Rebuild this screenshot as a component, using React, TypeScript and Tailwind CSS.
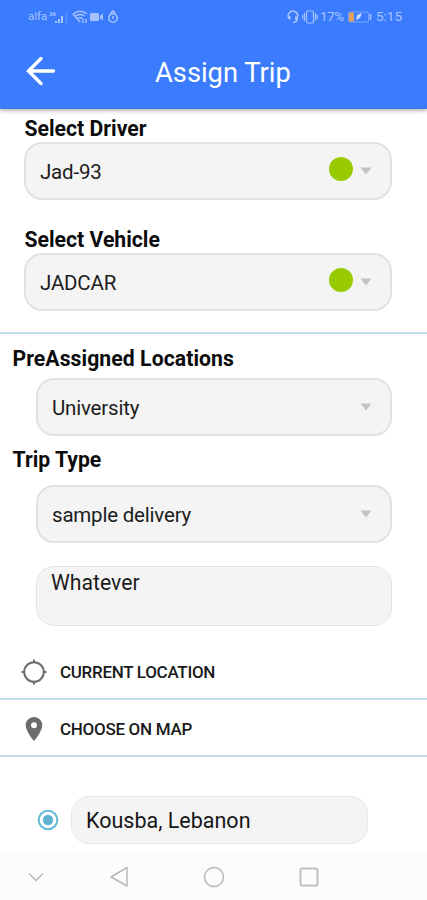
import clsx from 'clsx'
import type { ReactNode } from 'react'

function StatusBar() {
  return (
    <div className="flex h-[33px] items-center justify-between pl-[28px] pr-[25px] text-[#a6c3ff]">
      <div className="flex items-center">
        <span className="w-[19px] text-[11.5px] leading-none">alfa</span>
        <svg width="22" height="16" viewBox="0 0 22 16" fill="currentColor">
          <text x="2" y="7" fontSize="6" fontWeight="700">36</text>
          <rect x="8" y="12" width="2" height="2" />
          <rect x="11" y="10" width="2" height="4" />
          <rect x="14" y="7" width="2" height="7" />
          <rect x="18.5" y="3" width="2" height="11" opacity=".25" />
        </svg>
        <svg
          className="ml-[3px]"
          width="16"
          height="16"
          viewBox="0 0 16 16"
          fill="none"
          stroke="currentColor"
          strokeWidth="1.4"
        >
          <path d="M1 5Q8 -0.5 15 5M1 5L8 13M3.3 7.3Q8 3.8 12.5 7M5.5 9.7Q8 7.7 10.5 9.7" />
          <path d="M11 10V14M14 10V14" />
        </svg>
        <svg className="ml-[2px]" width="14" height="10" viewBox="0 0 14 10" fill="currentColor">
          <rect x="0" y="1" width="9" height="8" rx="1" />
          <path d="M9.8 4L13 1.5V8.5L9.8 6Z" />
        </svg>
        <svg
          className="ml-[3px]"
          width="12"
          height="14"
          viewBox="0 0 12 14"
          fill="none"
          stroke="currentColor"
          strokeWidth="1.5"
        >
          <circle cx="6" cy="8" r="4.2" />
          <path d="M3.5 3.5L6 1L8.5 3.5M6 6V9" />
        </svg>
      </div>
      <div className="flex items-center">
        <svg
          width="12"
          height="14"
          viewBox="0 0 12 14"
          fill="none"
          stroke="currentColor"
          strokeWidth="1.5"
        >
          <path d="M3 9.5A4.7 4.7 0 1 1 10.5 7C10.5 10 9 12.5 6 12.5" />
          <path d="M2.5 6V9M9 6.5V9.5" strokeWidth="2" />
        </svg>
        <svg
          className="ml-[3px]"
          width="16"
          height="14"
          viewBox="0 0 16 14"
          fill="none"
          stroke="currentColor"
          strokeWidth="1.2"
        >
          <rect x="4.5" y="1" width="7" height="12" rx="1.5" />
          <path d="M2.5 3V11M.7 5V9M13.5 3V11M15.3 5V9" />
        </svg>
        <span className="ml-[2px] w-[26px] text-[13.5px] leading-none tracking-[-0.4px]">17%</span>
        <svg className="ml-[2px]" width="24" height="12" viewBox="0 0 24 12" fill="none">
          <rect x=".6" y="1" width="20" height="10" rx="1.5" stroke="#7ea8ff" />
          <rect x="1" y="1.5" width="5" height="9" fill="#e0a060" />
          <path d="M8 9L9 4L14 2L12 7Z" fill="#c3d7ff" />
          <path d="M22.5 3V9" stroke="#a6c3ff" strokeWidth="1.5" />
        </svg>
        <span className="ml-[4px] text-[13.5px] leading-none">5:15</span>
      </div>
    </div>
  )
}

function Header() {
  return (
    <header className="relative h-[109px] bg-[#3b7cff] shadow-[0_1px_5px_rgba(0,0,0,0.4)]">
      <StatusBar />
      <div className="flex h-[76px] items-center pl-[26px]">
        <svg
          width="30"
          height="30"
          viewBox="0 0 30 30"
          fill="none"
          stroke="#fff"
          strokeWidth="3.4"
          strokeLinecap="round"
        >
          <path d="M27.5 15H3M15 2.5L2.5 15L15 27.5" />
        </svg>
        <h1 className="ml-[99px] mt-[3px] text-[27.3px] leading-8 text-white">Assign Trip</h1>
      </div>
    </header>
  )
}

function Label({ children, className }: { children: ReactNode; className?: string }) {
  return (
    <div className={clsx('h-6 text-[21.2px] font-bold leading-6 text-[#0c0c0c]', className)}>
      {children}
    </div>
  )
}

function Select({
  value,
  available,
  className,
}: {
  value: string
  available?: boolean
  className?: string
}) {
  return (
    <div
      className={clsx(
        'mr-[35px] flex h-[58px] items-center rounded-[18px] border-2 border-[#dfe3e6] bg-[#f4f4f4] pl-[14px] pr-[18px]',
        className,
      )}
    >
      <span className="mt-px grow text-[20.5px] leading-6 tracking-[-0.2px] text-[#1c1c1c]">
        {value}
      </span>
      {available && <span className="mb-[4px] mr-[7px] size-6 rounded-full bg-[#97cb00]" />}
      <svg width="12" height="8" viewBox="0 0 12 8" fill="#c2c3c5">
        <path d="M.5 .5H11.5L6 7.5Z" />
      </svg>
    </div>
  )
}

function Divider() {
  return <div className="h-[2px] bg-[#c3dcec]" />
}

function Action({ icon, label }: { icon: ReactNode; label: string }) {
  return (
    <div className="flex h-[55px] items-center pl-[21px] pt-[2px] text-[#6c6c6c]">
      {icon}
      <span className="ml-[13px] text-[17px] font-medium leading-5 tracking-[-0.3px] text-[#1a1a1a]">
        {label}
      </span>
    </div>
  )
}

function NavBar() {
  return (
    <nav className="h-12 bg-[#fcfcfc]">
      <svg
        width="427"
        height="48"
        viewBox="0 0 427 48"
        fill="none"
        stroke="#b8b8b8"
        strokeWidth="1.5"
      >
        <path d="M29 21.5L36 28.5L43 21.5" />
        <path d="M127 15.5V34L111 25Z" strokeLinejoin="round" />
        <circle cx="214" cy="25" r="9.5" />
        <rect x="300.5" y="16.5" width="17" height="17" rx="1.5" stroke="#c0c0c0" strokeWidth="2" />
      </svg>
    </nav>
  )
}

export default function App() {
  return (
    <div className="flex h-[900px] w-[427px] flex-col overflow-hidden bg-white font-[Roboto,sans-serif]">
      <Header />
      <main className="flex grow flex-col">
        <Label className="ml-[24.5px] mt-[8px]">Select Driver</Label>
        <Select value="Jad-93" available className="ml-[24px] mt-[1px]" />
        <Label className="ml-[24.5px] mt-[28px]">Select Vehicle</Label>
        <Select value="JADCAR" available className="mb-[21px] ml-[24px] mt-[1px]" />
        <Divider />

        <Label className="ml-[12.5px] mt-[13px] tracking-[0.06px]">PreAssigned Locations</Label>
        <Select value="University" className="ml-[36px] mt-[7px]" />
        <Label className="ml-[12.5px] mt-[12px]">Trip Type</Label>
        <Select value="sample delivery" className="ml-[36px] mt-[13px]" />
        <div className="ml-[36px] mr-[35px] mt-[23px] h-[60px] rounded-[18px] border border-[#e2e3e4] bg-[#f4f4f4] pl-[14px] pt-[4px] text-[21.2px] leading-6 text-[#1c1c1c]">
          Whatever
        </div>

        <div className="mt-[17px]">
          <Action
            label="CURRENT LOCATION"
            icon={
              <svg
                width="26"
                height="26"
                viewBox="0 0 26 26"
                fill="none"
                stroke="currentColor"
                strokeWidth="2"
              >
                <circle cx="13" cy="13" r="9.8" />
                <path d="M13 .5V4M13 22V25.5M.5 13H4M22 13H25.5" />
              </svg>
            }
          />
          <Divider />
          <Action
            label="CHOOSE ON MAP"
            icon={
              <svg width="26" height="26" viewBox="0 0 26 26" fill="currentColor">
                <path
                  fillRule="evenodd"
                  d="M13 1C8.3 1 4.7 4.7 4.7 9.2C4.7 15.2 13 25 13 25S21.3 15.2 21.3 9.2C21.3 4.7 17.7 1 13 1ZM13 6.2A3 3 0 1 1 13 12.2A3 3 0 1 1 13 6.2Z"
                />
              </svg>
            }
          />
          <Divider />
        </div>

        <div className="mt-[39px] flex h-12 items-center pl-[37px]">
          <svg width="22" height="22" viewBox="0 0 22 22">
            <circle cx="11" cy="11" r="9.3" fill="#fff" stroke="#67b7d5" strokeWidth="2" />
            <circle cx="11" cy="11" r="5.2" fill="#5fb3d3" />
          </svg>
          <div className="ml-[12px] flex h-12 w-[297px] items-center rounded-[18px] border border-[#e6e7e8] bg-[#f4f4f4] pl-[14px] pt-[2px] text-[21.5px] text-[#161616]">
            Kousba, Lebanon
          </div>
        </div>
      </main>
      <NavBar />
    </div>
  )
}
